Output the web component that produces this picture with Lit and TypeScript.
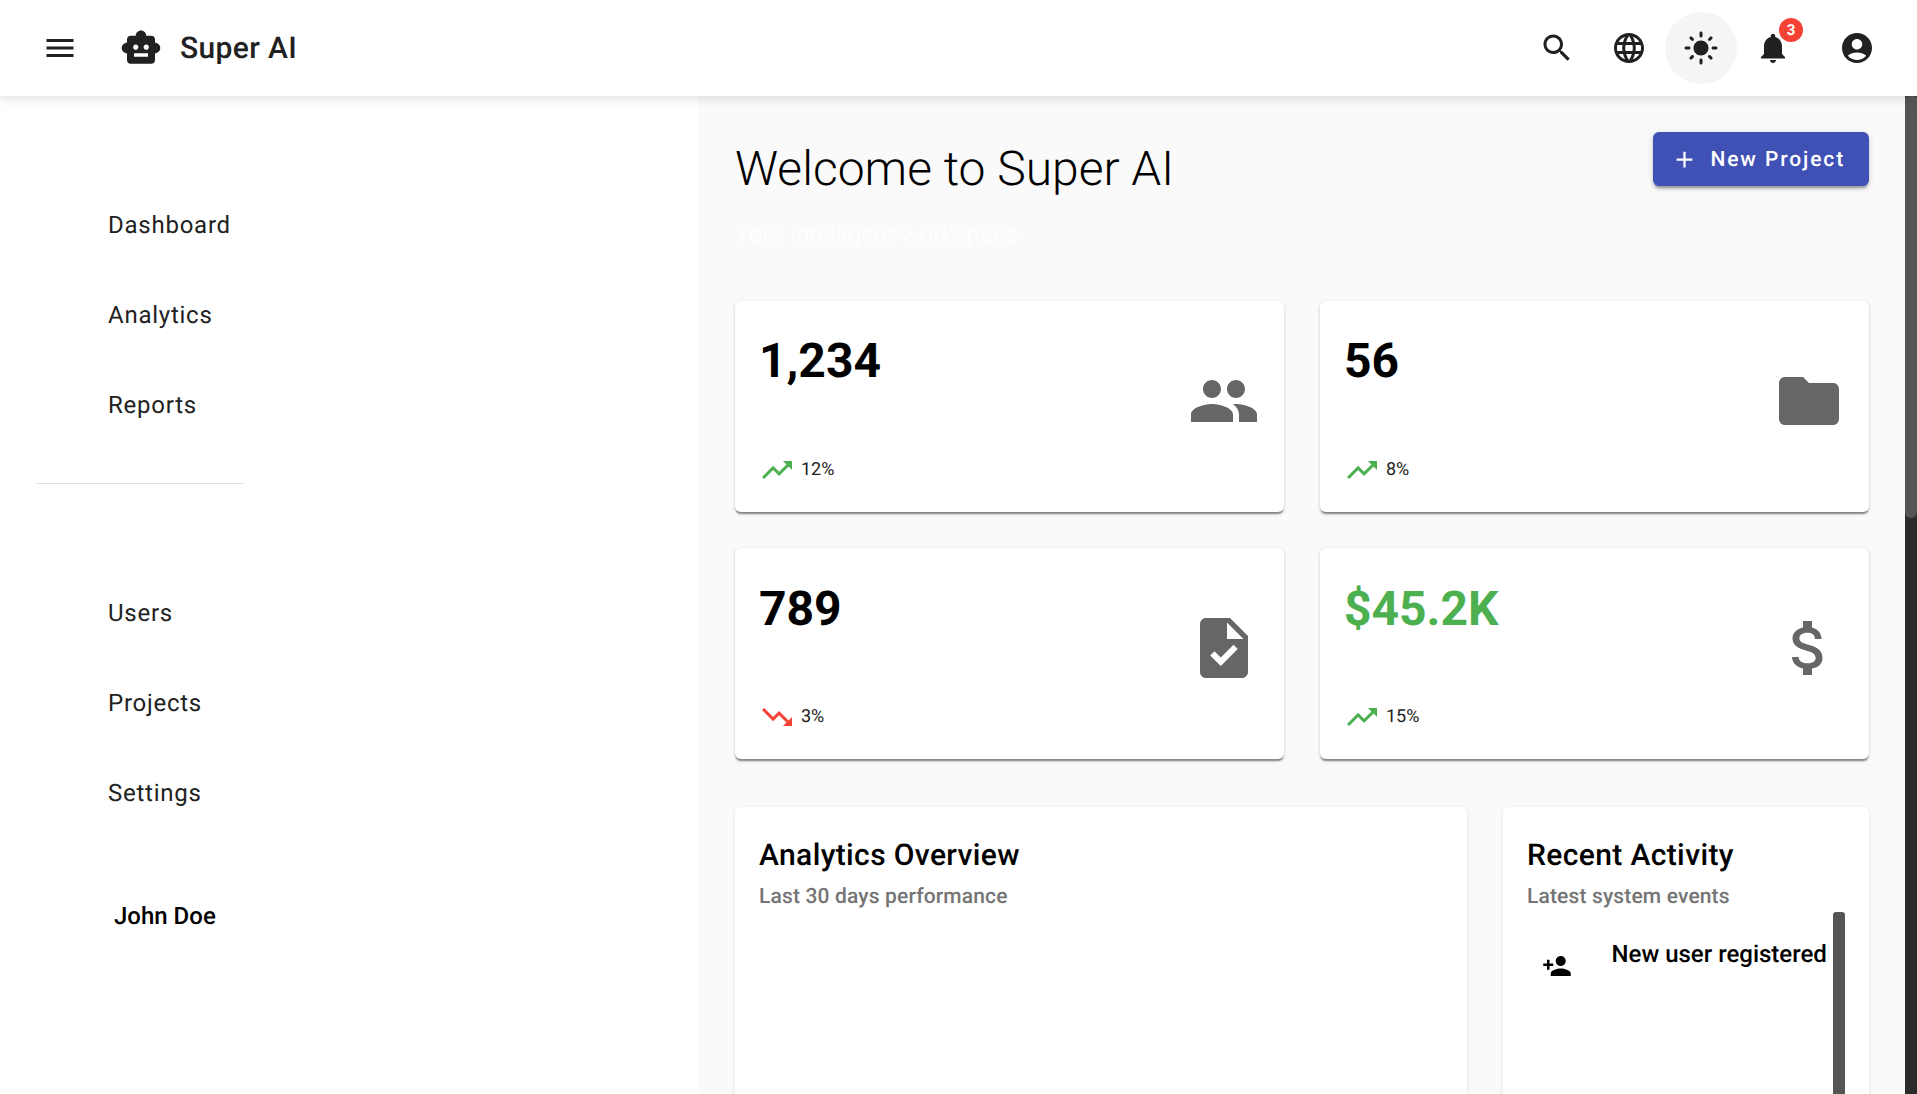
import { html, css, svg, LitElement } from "lit";
import { customElement } from "lit/decorators.js";

const ICONS: Record<string, string> = {
  menu: "M3 18h18v-2H3v2zm0-5h18v-2H3v2zm0-7v2h18V6H3z",
  toy: "M20 9V7c0-1.1-.9-2-2-2h-3c0-1.66-1.34-3-3-3S9 3.34 9 5H6c-1.1 0-2 .9-2 2v2c-1.66 0-3 1.34-3 3s1.34 3 3 3v4c0 1.1.9 2 2 2h12c1.1 0 2-.9 2-2v-4c1.66 0 3-1.34 3-3s-1.34-3-3-3zM7.5 11.5C7.5 10.67 8.17 10 9 10s1.5.67 1.5 1.5S9.83 13 9 13s-1.5-.67-1.5-1.5zM16 17H8v-2h8v2zm-1-4c-.83 0-1.5-.67-1.5-1.5S14.17 10 15 10s1.5.67 1.5 1.5S15.83 13 15 13z",
  search: "M15.5 14h-.79l-.28-.27C15.41 12.59 16 11.11 16 9.5 16 5.91 13.09 3 9.5 3S3 5.91 3 9.5 5.91 16 9.5 16c1.61 0 3.09-.59 4.23-1.57l.27.28v.79l5 4.99L20.49 19l-4.99-5zm-6 0C7.01 14 5 11.99 5 9.5S7.01 5 9.5 5 14 7.01 14 9.5 11.99 14 9.5 14z",
  language: "M11.99 2C6.47 2 2 6.48 2 12s4.47 10 9.99 10C17.52 22 22 17.52 22 12S17.52 2 11.99 2zm6.93 6h-2.95c-.32-1.25-.78-2.45-1.38-3.56 1.84.63 3.37 1.91 4.33 3.56zM12 4.04c.83 1.2 1.48 2.53 1.91 3.96h-3.82c.43-1.43 1.08-2.76 1.91-3.96zM4.26 14C4.1 13.36 4 12.69 4 12s.1-1.36.26-2h3.38c-.08.66-.14 1.32-.14 2 0 .68.06 1.34.14 2H4.26zm.82 2h2.95c.32 1.25.78 2.45 1.38 3.56-1.84-.63-3.37-1.9-4.33-3.56zm2.95-8H5.08c.96-1.66 2.49-2.93 4.33-3.56C8.81 5.55 8.35 6.75 8.03 8zM12 19.96c-.83-1.2-1.48-2.53-1.91-3.96h3.82c-.43 1.43-1.08 2.76-1.91 3.96zM14.34 14H9.66c-.09-.66-.16-1.32-.16-2 0-.68.07-1.35.16-2h4.68c.09.65.16 1.32.16 2 0 .68-.07 1.34-.16 2zm.25 5.56c.6-1.11 1.06-2.31 1.38-3.56h2.95c-.96 1.65-2.49 2.93-4.33 3.56zM16.36 14c.08-.66.14-1.32.14-2 0-.68-.06-1.34-.14-2h3.38c.16.64.26 1.31.26 2s-.1 1.36-.26 2h-3.38z",
  sun: "M12 7c-2.76 0-5 2.24-5 5s2.24 5 5 5 5-2.24 5-5-2.24-5-5-5zM2 13h2c.55 0 1-.45 1-1s-.45-1-1-1H2c-.55 0-1 .45-1 1s.45 1 1 1zm18 0h2c.55 0 1-.45 1-1s-.45-1-1-1h-2c-.55 0-1 .45-1 1s.45 1 1 1zM11 2v2c0 .55.45 1 1 1s1-.45 1-1V2c0-.55-.45-1-1-1s-1 .45-1 1zm0 18v2c0 .55.45 1 1 1s1-.45 1-1v-2c0-.55-.45-1-1-1s-1 .45-1 1zM5.99 4.58c-.39-.39-1.03-.39-1.41 0-.39.39-.39 1.03 0 1.41l1.06 1.06c.39.39 1.03.39 1.41 0s.39-1.03 0-1.41L5.99 4.58zm12.37 12.37c-.39-.39-1.03-.39-1.41 0-.39.39-.39 1.03 0 1.41l1.06 1.06c.39.39 1.03.39 1.41 0 .39-.39.39-1.03 0-1.41l-1.06-1.06zm1.06-10.96c.39-.39.39-1.03 0-1.41-.39-.39-1.03-.39-1.41 0l-1.06 1.06c-.39.39-.39 1.03 0 1.41s1.03.39 1.41 0l1.06-1.06zM7.05 18.36c.39-.39.39-1.03 0-1.41-.39-.39-1.03-.39-1.41 0l-1.06 1.06c-.39.39-.39 1.03 0 1.41s1.03.39 1.41 0l1.06-1.06z",
  bell: "M12 22c1.1 0 2-.9 2-2h-4c0 1.1.89 2 2 2zm6-6v-5c0-3.07-1.64-5.64-4.5-6.32V4c0-.83-.67-1.5-1.5-1.5s-1.5.67-1.5 1.5v.68C7.63 5.36 6 7.92 6 11v5l-2 2v1h16v-1l-2-2z",
  account: "M12 2C6.48 2 2 6.48 2 12s4.48 10 10 10 10-4.48 10-10S17.52 2 12 2zm0 4c1.93 0 3.5 1.57 3.5 3.5S13.93 13 12 13s-3.5-1.57-3.5-3.5S10.07 6 12 6zm0 14c-2.03 0-4.43-.82-6.14-2.88C7.55 15.8 9.68 15 12 15s4.45.8 6.14 2.12C16.43 19.18 14.03 20 12 20z",
  add: "M19 13h-6v6h-2v-6H5v-2h6V5h2v6h6v2z",
  people: "M16 11c1.66 0 2.99-1.34 2.99-3S17.66 5 16 5c-1.66 0-3 1.34-3 3s1.34 3 3 3zm-8 0c1.66 0 2.99-1.34 2.99-3S9.66 5 8 5C6.34 5 5 6.34 5 8s1.34 3 3 3zm0 2c-2.33 0-7 1.17-7 3.5V19h14v-2.5c0-2.33-4.67-3.5-7-3.5zm8 0c-.29 0-.62.02-.97.05 1.16.84 1.97 1.97 1.97 3.45V19h6v-2.5c0-2.33-4.67-3.5-7-3.5z",
  folder: "M10 4H4c-1.1 0-1.99.9-1.99 2L2 18c0 1.1.9 2 2 2h16c1.1 0 2-.9 2-2V8c0-1.1-.9-2-2-2h-8l-2-2z",
  task: "M14 2H6c-1.1 0-1.99.9-1.99 2L4 20c0 1.1.89 2 1.99 2H18c1.1 0 2-.9 2-2V8l-6-6zm-3.06 16L7.4 14.46l1.41-1.41 2.12 2.12 4.24-4.24 1.41 1.41L10.94 18zM13 9V3.5L18.5 9H13z",
  money: "M11.8 10.9c-2.27-.59-3-1.2-3-2.15 0-1.09 1.01-1.85 2.7-1.85 1.78 0 2.44.85 2.5 2.1h2.21c-.07-1.72-1.12-3.3-3.21-3.81V3h-3v2.16c-1.94.42-3.5 1.68-3.5 3.61 0 2.31 1.91 3.46 4.7 4.13 2.5.6 3 1.48 3 2.41 0 .69-.49 1.79-2.7 1.79-2.06 0-2.87-.92-2.98-2.1h-2.2c.12 2.19 1.76 3.42 3.68 3.83V21h3v-2.15c1.95-.37 3.5-1.5 3.5-3.55 0-2.84-2.43-3.81-4.7-4.4z",
  up: "M16 6l2.29 2.29-4.88 4.88-4-4L2 16.59 3.41 18l6-6 4 4 6.3-6.29L22 12V6z",
  down: "M16 18l2.29-2.29-4.88-4.88-4 4L2 7.41 3.41 6l6 6 4-4 6.3 6.29L22 12v6z",
  personAdd: "M15 12c2.21 0 4-1.79 4-4s-1.79-4-4-4-4 1.79-4 4 1.79 4 4 4zm-9-2V7H4v3H1v2h3v3h2v-3h3v-2H6zm9 4c-2.67 0-8 1.34-8 4v2h16v-2c0-2.66-5.33-4-8-4z",
};

const icon = (name: string, size: number) => html`
  <svg class="icon" width=${size} height=${size} viewBox="0 0 24 24" fill="currentColor">
    ${svg`<path d=${ICONS[name]}></path>`}
  </svg>
`;

const STATS = [
  { value: "1,234", icon: "people", trend: "up", pct: "12%" },
  { value: "56", icon: "folder", trend: "up", pct: "8%" },
  { value: "789", icon: "task", trend: "down", pct: "3%" },
  { value: "$45.2K", icon: "money", trend: "up", pct: "15%", money: true },
];

@customElement("app-root")
export class AppRoot extends LitElement {
  static styles = css`
    :host {
      display: flex;
      flex-direction: column;
      height: 100vh;
      overflow: hidden;
      font-family: Roboto, "Noto Sans", sans-serif;
      text-rendering: geometricPrecision;
      color: #212121;
    }
    .icon {
      display: block;
      flex: none;
    }

    .toolbar {
      flex: none;
      height: 96px;
      box-sizing: border-box;
      padding: 0 24px;
      display: flex;
      align-items: center;
      background: #fff;
      position: relative;
      z-index: 2;
      box-shadow: 0 3px 9px rgba(0, 0, 0, 0.12);
    }
    .icon-btn {
      width: 72px;
      height: 72px;
      display: flex;
      align-items: center;
      justify-content: center;
      border-radius: 50%;
      position: relative;
      flex: none;
    }
    .icon-btn--active {
      background: #f5f5f5;
    }
    .icon-btn--last {
      margin-left: 12px;
    }
    .logo {
      margin-left: 24px;
    }
    .brand {
      margin-left: 18px;
      font-size: 30px;
      font-weight: 500;
      letter-spacing: 0.375px;
    }
    .spacer {
      flex: 1;
    }
    .badge {
      position: absolute;
      top: 6px;
      right: 6px;
      width: 24px;
      height: 24px;
      border-radius: 50%;
      background: #f44336;
      color: #fff;
      font-size: 15px;
      font-weight: 700;
      display: flex;
      align-items: center;
      justify-content: center;
    }

    .body {
      flex: 1;
      min-height: 0;
      display: flex;
    }
    .sidenav {
      flex: none;
      width: 699px;
      box-sizing: border-box;
      padding: 84px 0 0 36px;
      background: #fff;
    }
    .nav-item {
      width: 207px;
      height: 90px;
      box-sizing: border-box;
      padding-left: 72px;
      display: flex;
      align-items: center;
      font-size: 24px;
      letter-spacing: 0.75px;
    }
    .divider {
      width: 207px;
      height: 1.5px;
      background: #e0e0e0;
      margin: 32.5px 0 83.5px;
    }
    .user {
      margin: 60px 0 0 78px;
      font-size: 24px;
      line-height: 36px;
      font-weight: 500;
      color: #000;
    }

    .main {
      flex: 1;
      min-width: 0;
      overflow: hidden;
      background: #fafafa;
    }
    .page-scroll {
      flex: none;
      width: 12px;
      background: #2b2b2b;
    }
    .page-thumb {
      height: 422px;
      background: #555;
      border-radius: 3px 3px 6px 6px;
    }
    .content {
      padding: 36px;
      box-sizing: border-box;
    }
    .page-head {
      display: flex;
      justify-content: space-between;
      align-items: flex-start;
      margin-bottom: 47.5px;
    }
    h1 {
      margin: 0;
      font-size: 48px;
      line-height: 72px;
      font-weight: 300;
      color: #000;
      position: relative;
      top: 1px;
    }
    .tagline {
      margin-top: 13px;
      font-size: 24px;
      line-height: 36px;
      font-weight: 300;
      letter-spacing: 0.28px;
      color: #fff;
    }
    .new-btn {
      height: 54px;
      box-sizing: border-box;
      display: flex;
      align-items: center;
      padding: 2px 24px 0 18px;
      border-radius: 6px;
      background: #3f51b5;
      color: #fff;
      font-size: 21px;
      font-weight: 500;
      letter-spacing: 1.875px;
      box-shadow: 0 4px 2px -2px rgba(0, 0, 0, 0.2), 0 3px 3px rgba(0, 0, 0, 0.14), 0 1.5px 7px rgba(0, 0, 0, 0.12);
    }
    .new-btn .icon {
      margin: -2px 12px 0 0;
    }
    .stats {
      display: grid;
      grid-template-columns: 1fr 1fr;
      gap: 36px;
      margin-bottom: 47.5px;
    }
    .card {
      background: #fff;
      border-radius: 6px;
      box-sizing: border-box;
      padding: 24px;
    }
    .stat {
      height: 211.45px;
      padding-bottom: 24.45px;
      display: flex;
      justify-content: space-between;
      box-shadow: 0 3px 1.5px -1.5px rgba(0, 0, 0, 0.3), 0 1.5px 1.5px rgba(0, 0, 0, 0.14), 0 1.5px 4.5px rgba(0, 0, 0, 0.12);
    }
    .stat-left {
      display: flex;
      flex-direction: column;
      justify-content: space-between;
    }
    .stat-value {
      padding-top: 0.75px;
      font-size: 48px;
      line-height: 72px;
      font-weight: 700;
      color: #000;
    }
    .stat-value--money {
      color: #4caf50;
    }
    .stat-icon {
      margin-top: 40.5px;
      color: #666;
    }
    .trend {
      display: flex;
      align-items: center;
      gap: 6px;
      font-size: 18px;
      color: #212121;
    }
    .trend--up {
      color: #4caf50;
    }
    .trend--down {
      color: #f44336;
    }
    .panels {
      display: grid;
      grid-template-columns: 2fr 1fr;
      gap: 36px;
    }
    .panel {
      height: 900px;
      box-shadow: 0 1.5px 4.5px rgba(0, 0, 0, 0.1);
    }
    .panel-title {
      padding-top: 1px;
      font-size: 30px;
      line-height: 48px;
      font-weight: 500;
      letter-spacing: 0.375px;
      color: #000;
    }
    .panel-sub {
      margin-top: 2px;
      font-size: 21px;
      line-height: 30px;
      font-weight: 500;
      letter-spacing: 0.15px;
      color: #757575;
    }
    .activity {
      height: 600px;
      display: flex;
      color: #000;
    }
    .activity-item {
      flex: 1;
      min-width: 0;
      display: flex;
    }
    .activity-icon {
      margin: 39px 39.5px 0 15px;
    }
    .activity-text {
      margin-top: 24px;
      font-size: 24px;
      line-height: 36px;
      font-weight: 500;
      white-space: nowrap;
    }
    .activity-thumb {
      flex: none;
      width: 12px;
      background: #555;
      border-radius: 3px;
    }
  `;

  renderStat(s: (typeof STATS)[number]) {
    return html`
      <div class="card stat">
        <div class="stat-left">
          <div class="stat-value ${s.money ? "stat-value--money" : ""}">${s.value}</div>
          <div class="trend">
            <span class="trend--${s.trend}">${icon(s.trend, 36)}</span>
            <span>${s.pct}</span>
          </div>
        </div>
        <div class="stat-icon">${icon(s.icon, 72)}</div>
      </div>
    `;
  }

  render() {
    return html`
      <header class="toolbar">
        <div class="icon-btn">${icon("menu", 36)}</div>
        <div class="logo">${icon("toy", 42)}</div>
        <div class="brand">Super AI</div>
        <div class="spacer"></div>
        <div class="icon-btn">${icon("search", 36)}</div>
        <div class="icon-btn">${icon("language", 36)}</div>
        <div class="icon-btn icon-btn--active">${icon("sun", 36)}</div>
        <div class="icon-btn">${icon("bell", 36)}<span class="badge">3</span></div>
        <div class="icon-btn icon-btn--last">${icon("account", 36)}</div>
      </header>
      <div class="body">
        <nav class="sidenav">
          <div class="nav-item">Dashboard</div>
          <div class="nav-item">Analytics</div>
          <div class="nav-item">Reports</div>
          <div class="divider"></div>
          <div class="nav-item">Users</div>
          <div class="nav-item">Projects</div>
          <div class="nav-item">Settings</div>
          <div class="user">John Doe</div>
        </nav>
        <main class="main">
          <div class="content">
            <div class="page-head">
              <div>
                <h1>Welcome to Super AI</h1>
                <div class="tagline">Your intelligent workspace</div>
              </div>
              <div class="new-btn">${icon("add", 27)}New Project</div>
            </div>
            <div class="stats">${STATS.map((s) => this.renderStat(s))}</div>
            <div class="panels">
              <section class="card panel">
                <div class="panel-title">Analytics Overview</div>
                <div class="panel-sub">Last 30 days performance</div>
              </section>
              <section class="card panel">
                <div class="panel-title">Recent Activity</div>
                <div class="panel-sub">Latest system events</div>
                <div class="activity">
                  <div class="activity-item">
                    <div class="activity-icon">${icon("personAdd", 30)}</div>
                    <div class="activity-text">New user registered</div>
                  </div>
                  <div class="activity-thumb"></div>
                </div>
              </section>
            </div>
          </div>
        </main>
        <div class="page-scroll"><div class="page-thumb"></div></div>
      </div>
    `;
  }
}
